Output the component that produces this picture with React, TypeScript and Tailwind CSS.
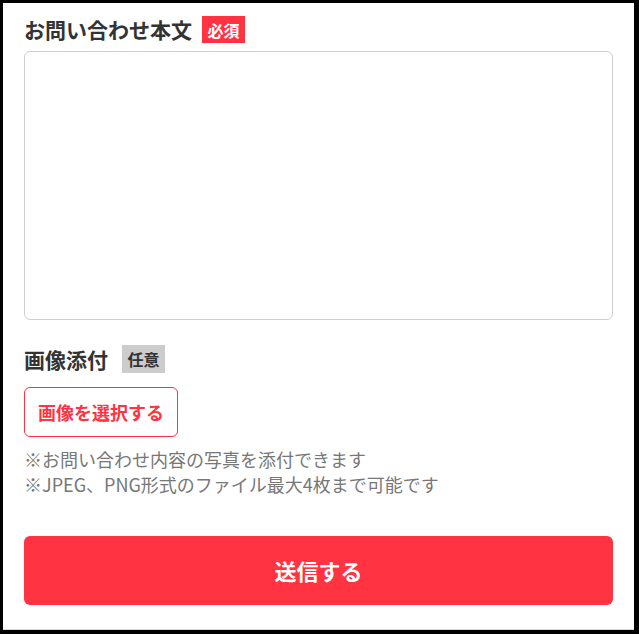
import React from "react";

const jp = { fontFamily: '"Noto Sans CJK JP", "Noto Sans", sans-serif' };

export default function App() {
  return (
    <div className="w-[639px] h-[634px] bg-black pt-[3px] pl-[3px] pr-[5px] pb-[4px]" style={jp}>
      <div className="h-full bg-white border-b border-[#d9d9d9] px-[21px] pt-[13px]">
        <div className="flex items-center h-[27px]">
          <span className="text-[21px] font-bold text-[#333] leading-none">お問い合わせ本文</span>
          <span className="ml-[10px] h-[27px] w-[43px] bg-[#ff3341] text-white text-[16px] font-bold flex items-center justify-center leading-none">必須</span>
        </div>
        <textarea className="mt-[8px] block w-full h-[269px] border border-[#cfcfcf] rounded-[6px] resize-none outline-none" />
        <div className="mt-[25px] flex items-center h-[28px]">
          <span className="text-[21px] font-bold text-[#333] leading-none">画像添付</span>
          <span className="ml-[14px] h-[28px] w-[43px] bg-[#cccccc] text-[#333] text-[16px] font-bold flex items-center justify-center leading-none">任意</span>
        </div>
        <button className="mt-[14px] w-[154px] h-[50px] border-[1.5px] border-[#ff3341] rounded-[6px] text-[#ff3341] text-[18px] font-bold flex items-center justify-center bg-white">
          画像を選択する
        </button>
        <div className="mt-[10px] text-[18px] leading-[25px] text-[#777]">
          <p>※お問い合わせ内容の写真を添付できます</p>
          <p>※JPEG、PNG形式のファイル最大4枚まで可能です</p>
        </div>
        <button className="mt-[39px] w-full h-[69px] bg-[#ff3341] rounded-[6px] text-white text-[22px] font-bold flex items-center justify-center">
          送信する
        </button>
      </div>
    </div>
  );
}
